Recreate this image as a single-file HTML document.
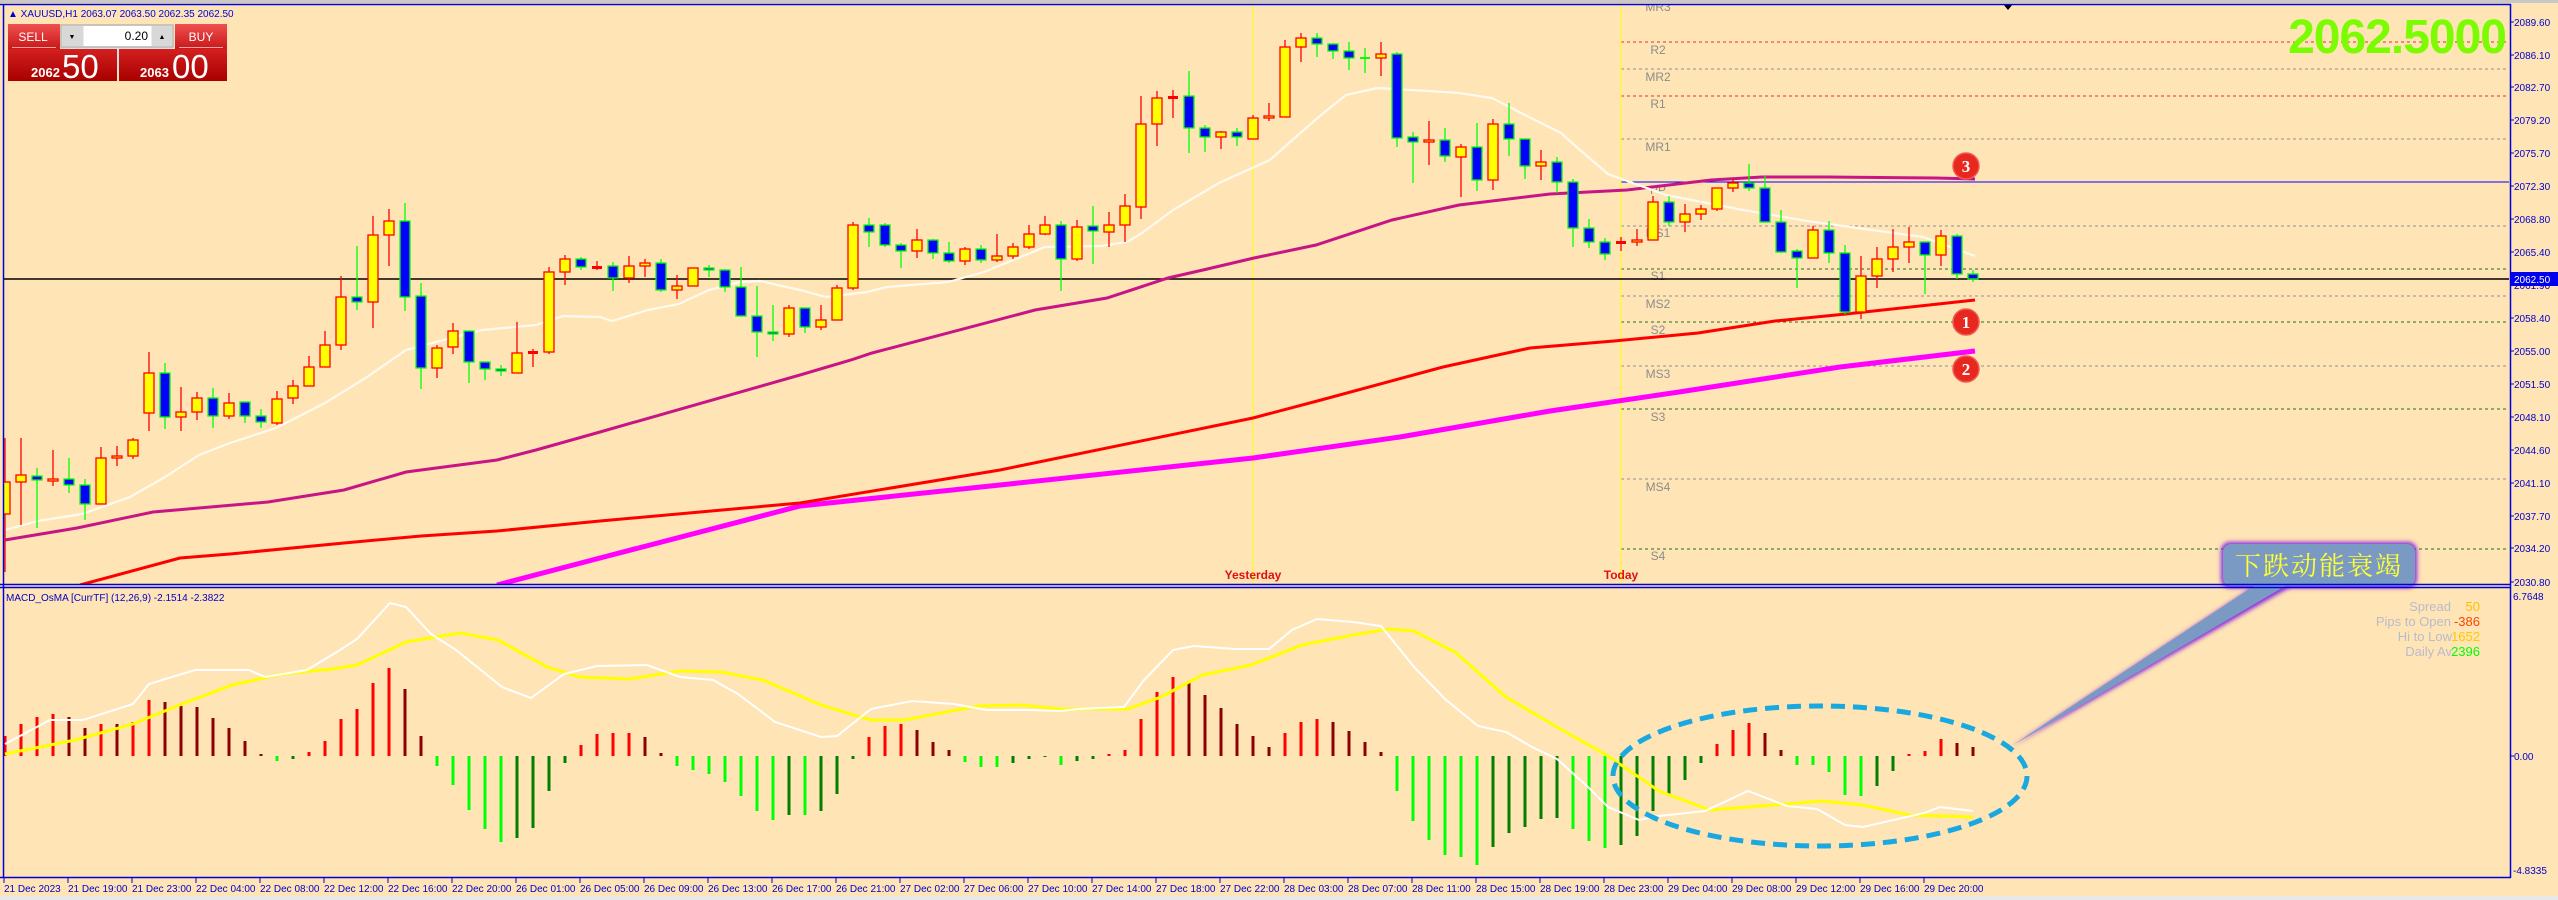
<!DOCTYPE html>
<html><head><meta charset="utf-8"><style>
html,body{margin:0;padding:0;background:#ffe4b5;}
body{width:2558px;height:900px;overflow:hidden;position:relative;font-family:"Liberation Sans",sans-serif;}
svg{position:absolute;left:0;top:0;}
.b{fill:#ffff00;stroke:#ff0000;stroke-width:1.3}
.s{fill:#0000ff;stroke:#00ff00;stroke-width:1.3}
.ax{font-family:"Liberation Sans",sans-serif;font-size:10px;fill:#0000cc;}
.pl{font-family:"Liberation Sans",sans-serif;font-size:12px;fill:#8c8c8c;text-anchor:middle;}
</style></head><body>
<svg width="2558" height="900" viewBox="0 0 2558 900" xmlns="http://www.w3.org/2000/svg">
<rect x="0" y="0" width="2558" height="900" fill="#ffe4b5"/>
<rect x="0" y="0" width="2558" height="3" fill="#c8c8c8"/>
<rect x="0" y="896" width="2558" height="4" fill="#e8e8e8"/>
<defs><clipPath id="mc"><rect x="4" y="5" width="2506" height="579"/></clipPath>
<clipPath id="ic"><rect x="4" y="588" width="2506" height="289"/></clipPath>
<filter id="gl" x="-20%" y="-20%" width="140%" height="140%"><feGaussianBlur stdDeviation="2"/></filter></defs>

<g clip-path="url(#mc)">
<!-- pivot lines -->
<g stroke-width="1" fill="none">
<line x1="1621" y1="42" x2="2509" y2="42" stroke="#e03030" stroke-dasharray="3,3"/>
<line x1="1621" y1="69" x2="2509" y2="69" stroke="#909090" stroke-dasharray="3,3"/>
<line x1="1621" y1="96" x2="2509" y2="96" stroke="#e03030" stroke-dasharray="3,3"/>
<line x1="1621" y1="139" x2="2509" y2="139" stroke="#909090" stroke-dasharray="3,3"/>
<line x1="1621" y1="182" x2="2509" y2="182" stroke="#0000ff"/>
<line x1="1621" y1="226" x2="2509" y2="226" stroke="#909090" stroke-dasharray="3,3"/>
<line x1="1621" y1="269" x2="2509" y2="269" stroke="#207020" stroke-dasharray="3,3"/>
<line x1="1621" y1="296" x2="2509" y2="296" stroke="#909090" stroke-dasharray="3,3"/>
<line x1="1621" y1="322" x2="2509" y2="322" stroke="#207020" stroke-dasharray="3,3"/>
<line x1="1621" y1="366" x2="2509" y2="366" stroke="#909090" stroke-dasharray="3,3"/>
<line x1="1621" y1="409" x2="2509" y2="409" stroke="#207020" stroke-dasharray="3,3"/>
<line x1="1621" y1="479" x2="2509" y2="479" stroke="#909090" stroke-dasharray="3,3"/>
<line x1="1621" y1="549" x2="2509" y2="549" stroke="#207020" stroke-dasharray="3,3"/>
</g>
<g class="pl">
<text x="1658" y="11">MR3</text><text x="1658" y="54">R2</text><text x="1658" y="81">MR2</text><text x="1658" y="108">R1</text><text x="1658" y="151">MR1</text><text x="1658" y="194">PP</text><text x="1658" y="237">MS1</text><text x="1658" y="280">S1</text><text x="1658" y="308">MS2</text><text x="1658" y="334">S2</text><text x="1658" y="378">MS3</text><text x="1658" y="421">S3</text><text x="1658" y="491">MS4</text><text x="1658" y="560">S4</text>
</g>
<line x1="1253" y1="5" x2="1253" y2="584" stroke="#ffff00" stroke-width="1"/>
<line x1="1621" y1="5" x2="1621" y2="584" stroke="#ffff00" stroke-width="1"/>
<line x1="4" y1="279" x2="2509" y2="279" stroke="#000" stroke-width="1.5"/>
<!-- MAs -->
<polyline fill="none" stroke="#ff00ff" stroke-width="5" points="497,585 600,558 800,506 1000,485 1253,458 1400,437 1550,411 1679,392 1840,367 1975,351"/>
<polyline fill="none" stroke="#ff0000" stroke-width="3" points="80,585 180,558 230,554 344,543 421,536 497,531 600,521 800,503 1000,470 1253,418 1321,400 1443,367 1530,348 1614,341 1698,333 1775,321 1846,314 1975,300"/>
<polyline fill="none" stroke="#c71585" stroke-width="3" points="5,540 77,528 153,512 268,502 344,490 406,472 497,460 536,450 600,432 800,375 851,360 872,353 1035,310 1107,298 1168,278 1203,270 1254,258 1316,245 1392,220 1459,205 1550,194 1627,190 1711,180 1762,177 1827,177 1936,178 1975,179"/>
<polyline fill="none" stroke="#fffaf0" stroke-width="2.2" points="5,530 38,521 82,514 130,497 165,477 199,455 230,443 276,428 325,403 367,377 406,350 436,342 482,330 536,325 563,316 600,317 612,321 648,310 679,304 709,290 740,282 760,281 800,290 826,297 867,292 887,287 948,282 984,272 1045,247 1101,246 1127,242 1142,233 1173,210 1219,183 1270,160 1290,142 1321,115 1346,95 1377,88 1428,91 1459,93 1492,98 1525,115 1561,133 1580,150 1608,174 1666,195 1743,210 1807,221 1872,230 1923,237 1975,256"/>
<!-- wicks -->
<path fill="none" stroke="#ff0000" stroke-width="1.3" d="M5 438V572M21 438V525M53 450V486M101 447V504M117 446V466M133 438V459M149 352V431M181 387V431M197 392V420M229 393V419M277 391V425M293 380V404M309 356V386M325 331V367M341 276V350M373 216V328M389 209V266M437 345V378M453 323V354M517 322V373M533 349V367M549 267V354M565 255V285M597 261V270M629 256V283M645 259V277M677 275V299M693 268V286M789 305V337M821 305V330M837 285V320M853 222V290M917 229V258M965 247V265M997 234V262M1013 243V259M1029 225V249M1045 216V235M1077 220V261M1109 212V247M1125 194V242M1141 96V219M1157 91V146M1173 90V118M1221 131V149M1253 115V139M1269 103V121M1285 40V117M1301 33V62M1381 42V76M1429 121V165M1461 144V197M1493 119V190M1541 150V180M1621 237V251M1637 229V246M1653 196V240M1685 204V232M1701 205V220M1717 188V211M1733 178V192M1813 226V258M1861 256V319M1877 247V288M1893 229V272M1909 227V263M1941 230V266"/>
<path fill="none" stroke="#00ff00" stroke-width="1.3" d="M37 468V528M69 458V493M85 479V520M165 363V429M213 388V428M245 402V423M261 409V428M357 246V310M405 203V311M421 283V389M469 331V383M485 362V380M501 365V376M581 257V270M613 262V291M661 259V292M709 265V277M725 269V292M741 267V316M757 286V357M773 305V341M805 308V333M869 218V247M885 223V247M901 243V268M933 239V259M949 242V263M981 245V263M1061 221V291M1093 206V264M1189 71V153M1205 125V152M1237 128V146M1317 33V57M1333 43V59M1349 42V70M1365 48V73M1397 52V147M1413 132V183M1445 128V162M1477 123V191M1509 103V156M1525 139V179M1557 157V193M1573 179V247M1589 219V248M1605 238V260M1669 196V226M1749 164V191M1765 176V222M1781 210V253M1797 249V288M1829 221V263M1845 245V314M1925 242V294M1957 234V279M1973 270V282"/>
<!-- bull bodies -->
<g class="b">
<rect x="0" y="482" width="10" height="32"/><rect x="16" y="475" width="10" height="7"/><rect x="48" y="479" width="10" height="2"/><rect x="96" y="458" width="10" height="46"/><rect x="112" y="456" width="10" height="2"/><rect x="128" y="440" width="10" height="16"/><rect x="144" y="373" width="10" height="40"/><rect x="176" y="412" width="10" height="5"/><rect x="192" y="398" width="10" height="14"/><rect x="224" y="403" width="10" height="13"/><rect x="272" y="399" width="10" height="24"/><rect x="288" y="386" width="10" height="12"/><rect x="304" y="367" width="10" height="19"/><rect x="320" y="345" width="10" height="22"/><rect x="336" y="297" width="10" height="48"/><rect x="368" y="235" width="10" height="67"/><rect x="384" y="221" width="10" height="14"/><rect x="432" y="348" width="10" height="20"/><rect x="448" y="331" width="10" height="16"/><rect x="512" y="353" width="10" height="20"/><rect x="544" y="272" width="10" height="80"/><rect x="560" y="259" width="10" height="13"/><rect x="624" y="266" width="10" height="12"/><rect x="640" y="263" width="10" height="3"/><rect x="672" y="286" width="10" height="4"/><rect x="688" y="268" width="10" height="18"/><rect x="784" y="308" width="10" height="26"/><rect x="816" y="320" width="10" height="7"/><rect x="832" y="288" width="10" height="32"/><rect x="848" y="225" width="10" height="63"/><rect x="912" y="240" width="10" height="11"/><rect x="960" y="249" width="10" height="12"/><rect x="992" y="256" width="10" height="4"/><rect x="1008" y="247" width="10" height="9"/><rect x="1024" y="234" width="10" height="13"/><rect x="1040" y="225" width="10" height="9"/><rect x="1072" y="227" width="10" height="32"/><rect x="1104" y="225" width="10" height="7"/><rect x="1120" y="206" width="10" height="19"/><rect x="1136" y="124" width="10" height="83"/><rect x="1152" y="98" width="10" height="26"/><rect x="1216" y="132" width="10" height="5"/><rect x="1248" y="118" width="10" height="21"/><rect x="1264" y="116" width="10" height="2"/><rect x="1280" y="47" width="10" height="70"/><rect x="1296" y="38" width="10" height="9"/><rect x="1376" y="54" width="10" height="4"/><rect x="1424" y="140" width="10" height="2"/><rect x="1456" y="147" width="10" height="10"/><rect x="1488" y="124" width="10" height="56"/><rect x="1536" y="162" width="10" height="4"/><rect x="1632" y="240" width="10" height="2"/><rect x="1648" y="202" width="10" height="38"/><rect x="1680" y="214" width="10" height="8"/><rect x="1696" y="209" width="10" height="5"/><rect x="1712" y="188" width="10" height="21"/><rect x="1728" y="183" width="10" height="5"/><rect x="1808" y="230" width="10" height="28"/><rect x="1856" y="276" width="10" height="36"/><rect x="1872" y="259" width="10" height="17"/><rect x="1888" y="247" width="10" height="12"/><rect x="1904" y="242" width="10" height="5"/><rect x="1936" y="236" width="10" height="19"/>
</g>
<g fill="#ff0000"><rect x="528" y="351" width="10" height="3"/><rect x="592" y="266" width="10" height="3"/><rect x="1168" y="96" width="10" height="3"/><rect x="1616" y="241" width="10" height="3"/></g>
<rect x="1360" y="57" width="10" height="2" fill="#00ff00"/>
<!-- bear bodies -->
<g class="s">
<rect x="32" y="476" width="10" height="4"/><rect x="64" y="479" width="10" height="6"/><rect x="80" y="485" width="10" height="19"/><rect x="160" y="373" width="10" height="44"/><rect x="208" y="398" width="10" height="18"/><rect x="240" y="402" width="10" height="14"/><rect x="256" y="416" width="10" height="6"/><rect x="352" y="297" width="10" height="5"/><rect x="400" y="221" width="10" height="76"/><rect x="416" y="296" width="10" height="72"/><rect x="464" y="331" width="10" height="31"/><rect x="480" y="362" width="10" height="7"/><rect x="496" y="369" width="10" height="2"/><rect x="576" y="259" width="10" height="8"/><rect x="608" y="266" width="10" height="12"/><rect x="656" y="263" width="10" height="27"/><rect x="704" y="268" width="10" height="2"/><rect x="720" y="270" width="10" height="17"/><rect x="736" y="287" width="10" height="29"/><rect x="752" y="316" width="10" height="16"/><rect x="768" y="332" width="10" height="2"/><rect x="800" y="308" width="10" height="19"/><rect x="864" y="225" width="10" height="7"/><rect x="880" y="225" width="10" height="20"/><rect x="896" y="245" width="10" height="6"/><rect x="928" y="240" width="10" height="13"/><rect x="944" y="253" width="10" height="8"/><rect x="976" y="249" width="10" height="11"/><rect x="1056" y="225" width="10" height="34"/><rect x="1088" y="226" width="10" height="5"/><rect x="1184" y="96" width="10" height="32"/><rect x="1200" y="128" width="10" height="9"/><rect x="1232" y="132" width="10" height="5"/><rect x="1312" y="38" width="10" height="6"/><rect x="1328" y="44" width="10" height="7"/><rect x="1344" y="51" width="10" height="7"/><rect x="1392" y="54" width="10" height="84"/><rect x="1408" y="137" width="10" height="5"/><rect x="1440" y="140" width="10" height="16"/><rect x="1472" y="147" width="10" height="33"/><rect x="1504" y="124" width="10" height="15"/><rect x="1520" y="139" width="10" height="27"/><rect x="1552" y="162" width="10" height="20"/><rect x="1568" y="182" width="10" height="46"/><rect x="1584" y="228" width="10" height="14"/><rect x="1600" y="242" width="10" height="12"/><rect x="1664" y="202" width="10" height="20"/><rect x="1744" y="183" width="10" height="5"/><rect x="1760" y="188" width="10" height="34"/><rect x="1776" y="222" width="10" height="30"/><rect x="1792" y="251" width="10" height="7"/><rect x="1824" y="230" width="10" height="23"/><rect x="1840" y="253" width="10" height="59"/><rect x="1920" y="242" width="10" height="13"/><rect x="1952" y="236" width="10" height="38"/><rect x="1968" y="274" width="10" height="5"/>
</g>
<!-- numbered circles -->
<g font-family="Liberation Serif,serif" font-size="17" font-weight="bold" fill="#fff" text-anchor="middle">
<circle cx="1966" cy="166" r="13" fill="#e8281e" stroke="#f05a50" stroke-width="1.5"/><text x="1966" y="172">3</text>
<circle cx="1966" cy="322" r="13" fill="#e8281e" stroke="#f05a50" stroke-width="1.5"/><text x="1966" y="328">1</text>
<circle cx="1966" cy="369" r="13" fill="#e8281e" stroke="#f05a50" stroke-width="1.5"/><text x="1966" y="375">2</text>
</g>
<text x="1253" y="579" font-size="12" font-weight="bold" fill="#e01010" text-anchor="middle">Yesterday</text>
<text x="1621" y="579" font-size="12" font-weight="bold" fill="#e01010" text-anchor="middle">Today</text>
<text x="2506" y="53" font-size="48" font-weight="bold" fill="#7cfc00" text-anchor="end" letter-spacing="-1">2062.5000</text>
<path d="M2003 4 L2013 4 L2008 10 Z" fill="#000"/>
</g>

<!-- indicator -->
<g clip-path="url(#ic)">
<path fill="none" stroke="#ff0000" stroke-width="3" d="M5 756V736M21 756V724M37 756V717M53 756V714M101 756V724M133 756V722M149 756V700M309 756V752M325 756V741M341 756V719M357 756V709M373 756V683M389 756V668M581 756V745M597 756V734M613 756V733M629 756V733M869 756V737M885 756V726M901 756V724M1109 756V754M1125 756V750M1141 756V719M1157 756V692M1173 756V677M1285 756V733M1301 756V722M1317 756V719M1717 756V744M1733 756V730M1749 756V723M1909 756V754M1925 756V751M1941 756V739"/>
<path fill="none" stroke="#8b0000" stroke-width="3" d="M69 756V717M85 756V728M117 756V724M165 756V702M181 756V706M197 756V707M213 756V718M229 756V728M245 756V741M261 756V754M405 756V689M421 756V736M645 756V737M661 756V753M917 756V730M933 756V742M949 756V750M1189 756V682M1205 756V695M1221 756V708M1237 756V724M1253 756V736M1269 756V747M1333 756V722M1349 756V731M1365 756V742M1381 756V752M1765 756V733M1781 756V750M1957 756V743M1973 756V747"/>
<path fill="none" stroke="#00ff00" stroke-width="3" d="M277 756V761M437 756V766M453 756V785M469 756V810M485 756V829M501 756V842M677 756V766M693 756V770M709 756V774M725 756V782M741 756V796M757 756V811M773 756V820M805 756V815M965 756V762M981 756V767M997 756V767M1061 756V765M1397 756V791M1413 756V821M1429 756V840M1445 756V855M1461 756V857M1477 756V865M1573 756V829M1589 756V841M1605 756V848M1797 756V765M1813 756V765M1829 756V772M1845 756V795M1861 756V796"/>
<path fill="none" stroke="#008000" stroke-width="3" d="M293 756V759M517 756V838M533 756V828M549 756V791M565 756V763M789 756V815M821 756V811M837 756V794M853 756V759M1013 756V763M1029 756V759M1045 756V757M1077 756V761M1093 756V759M1493 756V847M1509 756V833M1525 756V827M1541 756V819M1557 756V818M1621 756V845M1637 756V836M1653 756V811M1669 756V796M1685 756V780M1701 756V763M1877 756V786M1893 756V771"/>
<polyline fill="none" stroke="#ffff00" stroke-width="3" points="5,754 75,740 133,724 182,704 232,685 282,674 332,669 357,665 406,642 460,633 498,640 547,667 580,677 630,679 680,671 721,672 763,680 821,705 871,720 904,720 978,706 1020,705 1061,709 1128,709 1161,697 1202,675 1251,665 1302,645 1353,635 1389,629 1414,631 1455,652 1506,697 1557,727 1608,756 1659,791 1710,810 1761,806 1822,801 1863,805 1909,815 1973,817"/>
<polyline fill="none" stroke="#ffffff" stroke-width="2" points="5,744 50,720 83,720 133,704 149,684 195,670 249,670 265,677 307,670 340,650 357,639 390,603 406,607 431,634 456,650 502,687 531,698 564,674 597,666 647,665 680,677 713,680 738,694 775,722 821,737 837,736 871,709 912,701 954,704 987,710 1028,710 1061,711 1078,709 1124,707 1144,680 1173,650 1194,646 1235,649 1269,649 1292,630 1317,619 1353,622 1381,626 1414,667 1445,699 1478,726 1506,732 1532,747 1557,759 1588,787 1608,807 1639,820 1659,816 1705,811 1748,791 1787,806 1817,809 1845,825 1863,827 1924,813 1940,807 1973,811"/>
<ellipse cx="1820" cy="776" rx="207" ry="70" fill="none" stroke="#1aa8e0" stroke-width="5" stroke-dasharray="14,8"/>
<text x="6" y="601" font-size="10" fill="#0000cc">MACD_OsMA [CurrTF] (12,26,9) -2.1514 -2.3822</text>
<g font-size="13" text-anchor="end">
<text x="2451" y="611" fill="#b8bccc">Spread</text><text x="2480" y="611" fill="#ffc000">50</text>
<text x="2451" y="626" fill="#b8bccc">Pips to Open</text><text x="2480" y="626" fill="#ff4500">-386</text>
<text x="2452" y="641" fill="#b8bccc">Hi to Low</text><text x="2480" y="641" fill="#ffc800">1652</text>
<text x="2452" y="656" fill="#b8bccc">Daily Av</text><text x="2480" y="656" fill="#00ff00">2396</text>
</g>
</g>

<!-- callout -->
<g>
<path d="M2255 586 L2292 586 L2011 747 Z" fill="#8a2be2" filter="url(#gl)"/>
<rect x="2221" y="542" width="196" height="46" rx="9" fill="#8a2be2" filter="url(#gl)"/>
<path d="M2257 584 L2289 584 L2013 745 Z" fill="#7a9ac4"/>
<rect x="2223" y="544" width="192" height="42" rx="8" fill="#7a9ac4"/>
<text x="2319" y="575" font-family="Liberation Serif,'Noto Serif CJK SC',serif" font-size="26" fill="#ffff33" text-anchor="middle" letter-spacing="2">下跌动能衰竭</text>
</g>

<!-- borders -->
<g stroke="#0000dd" fill="none" stroke-width="1.5">
<line x1="0" y1="4.5" x2="2511" y2="4.5"/>
<line x1="3.5" y1="4" x2="3.5" y2="877"/>
<line x1="0" y1="584.5" x2="2511" y2="584.5"/>
<line x1="0" y1="587.5" x2="2511" y2="587.5"/>
<line x1="2510.5" y1="4" x2="2510.5" y2="878"/>
<line x1="0" y1="877.5" x2="2511" y2="877.5"/>
</g>

<!-- price axis -->
<g class="ax">
<text x="2514" y="26">2089.60</text><text x="2514" y="59">2086.10</text><text x="2514" y="91">2082.70</text><text x="2514" y="124">2079.20</text><text x="2514" y="157">2075.70</text><text x="2514" y="190">2072.30</text><text x="2514" y="223">2068.80</text><text x="2514" y="256">2065.40</text><text x="2514" y="289">2061.90</text><text x="2514" y="322">2058.40</text><text x="2514" y="355">2055.00</text><text x="2514" y="388">2051.50</text><text x="2514" y="421">2048.10</text><text x="2514" y="454">2044.60</text><text x="2514" y="487">2041.10</text><text x="2514" y="520">2037.70</text><text x="2514" y="552">2034.20</text><text x="2514" y="586">2030.80</text>
<text x="2513" y="600">6.7648</text><text x="2514" y="760">0.00</text><text x="2513" y="874">-4.8335</text>
</g>
<g stroke="#0000dd" stroke-width="1">
<path d="M2511 22h3M2511 55h3M2511 87h3M2511 120h3M2511 153h3M2511 186h3M2511 219h3M2511 252h3M2511 318h3M2511 351h3M2511 384h3M2511 417h3M2511 450h3M2511 483h3M2511 516h3M2511 548h3M2511 582h3M2511 756h3"/>
</g>
<rect x="2511" y="272" width="47" height="14" fill="#0000ee"/>
<text x="2514" y="283" font-size="10" fill="#fff">2062.50</text>

<!-- time axis -->
<g stroke="#0000dd" stroke-width="1"><path d="M4 877v6M68 877v6M132 877v6M196 877v6M260 877v6M324 877v6M388 877v6M452 877v6M516 877v6M580 877v6M644 877v6M708 877v6M772 877v6M836 877v6M900 877v6M964 877v6M1028 877v6M1092 877v6M1156 877v6M1220 877v6M1284 877v6M1348 877v6M1412 877v6M1476 877v6M1540 877v6M1604 877v6M1668 877v6M1732 877v6M1796 877v6M1860 877v6M1924 877v6"/></g>
<g class="ax">
<text x="4" y="892">21 Dec 2023</text><text x="68" y="892">21 Dec 19:00</text><text x="132" y="892">21 Dec 23:00</text><text x="196" y="892">22 Dec 04:00</text><text x="260" y="892">22 Dec 08:00</text><text x="324" y="892">22 Dec 12:00</text><text x="388" y="892">22 Dec 16:00</text><text x="452" y="892">22 Dec 20:00</text><text x="516" y="892">26 Dec 01:00</text><text x="580" y="892">26 Dec 05:00</text><text x="644" y="892">26 Dec 09:00</text><text x="708" y="892">26 Dec 13:00</text><text x="772" y="892">26 Dec 17:00</text><text x="836" y="892">26 Dec 21:00</text><text x="900" y="892">27 Dec 02:00</text><text x="964" y="892">27 Dec 06:00</text><text x="1028" y="892">27 Dec 10:00</text><text x="1092" y="892">27 Dec 14:00</text><text x="1156" y="892">27 Dec 18:00</text><text x="1220" y="892">27 Dec 22:00</text><text x="1284" y="892">28 Dec 03:00</text><text x="1348" y="892">28 Dec 07:00</text><text x="1412" y="892">28 Dec 11:00</text><text x="1476" y="892">28 Dec 15:00</text><text x="1540" y="892">28 Dec 19:00</text><text x="1604" y="892">28 Dec 23:00</text><text x="1668" y="892">29 Dec 04:00</text><text x="1732" y="892">29 Dec 08:00</text><text x="1796" y="892">29 Dec 12:00</text><text x="1860" y="892">29 Dec 16:00</text><text x="1924" y="892">29 Dec 20:00</text>
</g>

<!-- header & trade panel -->
<text x="8" y="17" font-size="10" fill="#0000dd">▲ XAUUSD,H1  2063.07 2063.50 2062.35 2062.50</text>
<defs><linearGradient id="rg" x1="0" y1="0" x2="0" y2="1"><stop offset="0" stop-color="#f05050"/><stop offset="1" stop-color="#c81818"/></linearGradient>
<linearGradient id="rg2" x1="0" y1="0" x2="0" y2="1"><stop offset="0" stop-color="#d42020"/><stop offset="1" stop-color="#a80000"/></linearGradient></defs>
<rect x="8" y="24" width="52" height="25" fill="url(#rg)"/>
<line x1="12" y1="47.5" x2="56" y2="47.5" stroke="#f8a0a0"/>
<text x="33" y="41" font-size="12" fill="#fff" text-anchor="middle">SELL</text>
<rect x="61" y="37" width="112" height="33" fill="#e0e0e0"/>
<rect x="61" y="25" width="112" height="22" fill="#ececec" stroke="#a0a0a0"/>
<rect x="62" y="26" width="21" height="20" fill="#d8d8d8"/>
<rect x="152" y="26" width="20" height="20" fill="#d8d8d8"/>
<rect x="84" y="26" width="67" height="20" fill="#fff"/>
<text x="72" y="39" font-size="7" text-anchor="middle">▼</text>
<text x="162" y="39" font-size="7" text-anchor="middle">▲</text>
<text x="148" y="40" font-size="12" fill="#000" text-anchor="end">0.20</text>
<rect x="175" y="24" width="52" height="25" fill="url(#rg)"/>
<line x1="179" y1="47.5" x2="223" y2="47.5" stroke="#f8a0a0"/>
<text x="201" y="41" font-size="12" fill="#fff" text-anchor="middle">BUY</text>
<rect x="8" y="49" width="109" height="32" fill="url(#rg2)"/>
<rect x="119" y="49" width="108" height="32" fill="url(#rg2)"/>
<text x="31" y="77" font-size="13" font-weight="bold" fill="#fff">2062</text>
<text x="62" y="78" font-size="33" fill="#fff">50</text>
<text x="140" y="77" font-size="13" font-weight="bold" fill="#fff">2063</text>
<text x="172" y="78" font-size="33" fill="#fff">00</text>
</svg>
</body></html>
